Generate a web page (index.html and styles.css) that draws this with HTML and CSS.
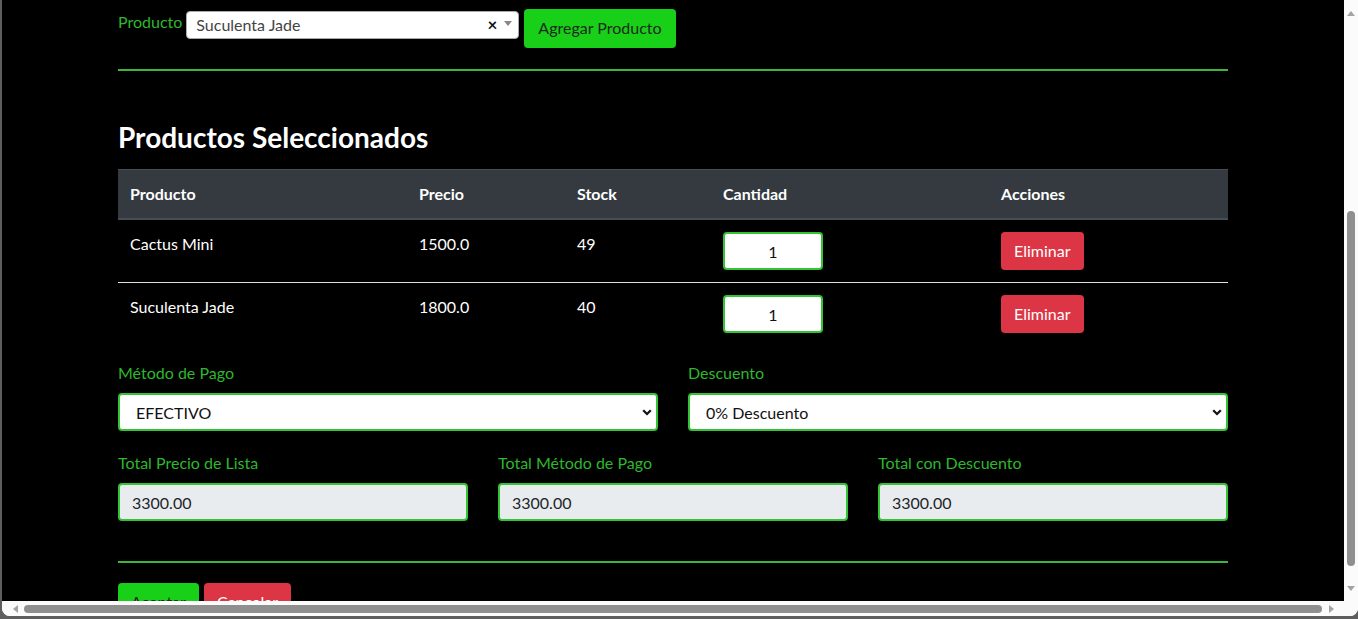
FILE: index.html
```html
<!DOCTYPE html>
<html lang="es">
<head>
<meta charset="utf-8">
<title>Nueva Venta</title>
<link rel="stylesheet" href="styles.css">
</head>
<body>
<div class="frame">
  <div class="view-row">
    <main class="viewport">
      <div class="container">
        <div class="add-row">
          <label class="lbl">Producto</label>
          <div class="s2">
            <span class="s2-text">Suculenta Jade</span>
            <span class="s2-clear">×</span>
            <svg class="s2-arrow" width="8" height="5" viewBox="0 0 8 5"><path d="M0 0H8L4 5Z" fill="#888"/></svg>
          </div>
          <button class="btn btn-green btn-add">Agregar Producto</button>
        </div>
        <hr class="sep sep-top">
        <h3 class="title">Productos Seleccionados</h3>
        <table class="tbl">
          <thead>
            <tr><th class="c1">Producto</th><th class="c2">Precio</th><th class="c3">Stock</th><th class="c4">Cantidad</th><th class="c5">Acciones</th></tr>
          </thead>
          <tbody>
            <tr><td>Cactus Mini</td><td>1500.0</td><td>49</td><td><input class="qty" type="text" value="1"></td><td><button class="btn btn-red">Eliminar</button></td></tr>
            <tr><td>Suculenta Jade</td><td>1800.0</td><td>40</td><td><input class="qty" type="text" value="1"></td><td><button class="btn btn-red">Eliminar</button></td></tr>
          </tbody>
        </table>
        <div class="grid2">
          <div class="field">
            <label class="flbl">Método de Pago</label>
            <div class="selwrap">
              <select class="fsel"><option>EFECTIVO</option></select>
              <svg class="chev" width="10" height="7" viewBox="0 0 10 7"><path d="M1.2 1.2L5 5L8.8 1.2" fill="none" stroke="#111" stroke-width="2.2"/></svg>
            </div>
          </div>
          <div class="field">
            <label class="flbl">Descuento</label>
            <div class="selwrap">
              <select class="fsel"><option>0% Descuento</option></select>
              <svg class="chev" width="10" height="7" viewBox="0 0 10 7"><path d="M1.2 1.2L5 5L8.8 1.2" fill="none" stroke="#111" stroke-width="2.2"/></svg>
            </div>
          </div>
        </div>
        <div class="grid3">
          <div class="field">
            <label class="flbl">Total Precio de Lista</label>
            <input class="ro" type="text" value="3300.00" readonly>
          </div>
          <div class="field">
            <label class="flbl">Total Método de Pago</label>
            <input class="ro" type="text" value="3300.00" readonly>
          </div>
          <div class="field">
            <label class="flbl">Total con Descuento</label>
            <input class="ro" type="text" value="3300.00" readonly>
          </div>
        </div>
        <hr class="sep sep-bottom">
        <div class="actions">
          <button class="btn btn-green">Aceptar</button>
          <button class="btn btn-red">Cancelar</button>
        </div>
      </div>
    </main>
    <div class="vscroll">
      <div class="arrow-box v-up"><svg width="8" height="5" viewBox="0 0 8 5"><path d="M0 5H8L4 0Z" fill="#a3a3a3"/></svg></div>
      <div class="v-gap"></div>
      <div class="v-thumb"></div>
      <div class="v-rest"></div>
      <div class="arrow-box v-down"><svg width="8" height="5" viewBox="0 0 8 5"><path d="M0 0H8L4 5Z" fill="#a3a3a3"/></svg></div>
    </div>
  </div>
  <div class="hscroll">
    <div class="arrow-box h-left"><svg width="5" height="8" viewBox="0 0 5 8"><path d="M5 0V8L0 4Z" fill="#a3a3a3"/></svg></div>
    <div class="h-track"><div class="h-thumb"></div></div>
    <div class="arrow-box h-right"><svg width="5" height="8" viewBox="0 0 5 8"><path d="M0 0V8L5 4Z" fill="#a3a3a3"/></svg></div>
    <div class="corner"></div>
  </div>
</div>
</body>
</html>
```
FILE: styles.css
```css
* { box-sizing: border-box; }
html, body {
  margin: 0;
  height: 619px;
  overflow: hidden;
  background: #5e5e5e;
}
body {
  font-family: Lato, "Liberation Sans", sans-serif;
  font-size: 16px;
  line-height: 24px;
  color: #fff;
}
.frame {
  margin-left: 2px;
  height: 616px;
  background: #fbfbfb;
  border-radius: 0 0 8px 8px;
  display: flex;
  flex-direction: column;
  overflow: hidden;
}
.view-row {
  height: 601px;
  display: flex;
}
.viewport {
  flex: 1;
  background: #000;
  overflow: hidden;
}
.container {
  width: 1110px;
  margin: 0 auto;
  padding-top: 9px;
}
.add-row {
  display: flex;
  align-items: flex-start;
}
.lbl {
  color: #2db82d;
  margin-top: 1px;
  line-height: 24px;
}
.s2 {
  margin-top: 2px;
  margin-left: 4px;
  width: 333px;
  height: 28px;
  background: #fff;
  border: 1px solid #aaa;
  border-radius: 4px;
  display: flex;
  align-items: center;
  padding: 0 6px 0 9px;
  color: #444;
}
.s2-text { flex: 1; }
.s2-clear {
  color: #111;
  font-weight: 700;
  font-size: 17px;
  margin-right: 7px;
  margin-top: -1px;
}
.s2-arrow { margin-top: -4px; }
.btn {
  font-family: inherit;
  font-size: 16px;
  line-height: 24px;
  border: 0;
  border-radius: 4px;
  padding: 7px 13px;
  cursor: pointer;
}
.btn-green {
  background: #18d018;
  color: #1b2a1b;
}
.btn-add {
  margin-left: 5px;
  padding: 7px 14px 8px;
}
.btn-red {
  background: #dc3545;
  color: #fff;
}
.sep {
  border: 0;
  height: 2px;
  background: #3bb53b;
  margin: 0;
}
.sep-top { margin-top: 21px; margin-bottom: 49px; }
.title {
  margin: 0 0 15px;
  font-size: 28px;
  line-height: 34px;
  font-weight: 700;
}
.tbl {
  width: 100%;
  border-collapse: collapse;
  margin-bottom: 16px;
}
.tbl th {
  background: #343a40;
  border-top: 1px solid #454d55;
  border-bottom: 2px solid #454d55;
  text-align: left;
  padding: 12px;
  font-weight: 700;
}
.tbl td {
  border-top: 1px solid #dee2e6;
  padding: 12px;
  vertical-align: top;
}
.c1 { width: 289px; }
.c2 { width: 158px; }
.c3 { width: 146px; }
.c4 { width: 278px; }
.c5 { width: 239px; }
.qty {
  display: block;
  width: 100px;
  height: 38px;
  border: 2px solid #33c433;
  border-radius: 4px;
  text-align: center;
  font-family: inherit;
  font-size: 16px;
  color: #111;
  background: #fff;
}
.tbl .btn-red { display: block; padding: 7px 13px; }
.grid2 {
  display: grid;
  grid-template-columns: 1fr 1fr;
  column-gap: 30px;
  margin-bottom: 20px;
}
.grid3 {
  display: grid;
  grid-template-columns: 1fr 1fr 1fr;
  column-gap: 30px;
}
.field { display: flex; flex-direction: column; }
.flbl {
  color: #2db82d;
  margin-bottom: 8px;
}
.selwrap { position: relative; }
.fsel {
  appearance: none;
  -webkit-appearance: none;
  width: 100%;
  height: 38px;
  border: 2px solid #33c433;
  border-radius: 4px;
  background: #fff;
  padding: 0 30px 0 16px;
  font-family: inherit;
  font-size: 16px;
  color: #111;
}
.chev {
  position: absolute;
  right: 6px;
  top: 16px;
}
.ro {
  width: 100%;
  height: 38px;
  border: 2px solid #33c433;
  border-radius: 4px;
  background: #e9ecef;
  padding: 0 12px;
  font-family: inherit;
  font-size: 16px;
  color: #212529;
}
.sep-bottom { margin-top: 40px; margin-bottom: 20px; }
.actions { display: flex; gap: 5px; }
.actions .btn { padding: 7px 13px; }
.actions .btn-green { color: #1b2a1b; }

/* scrollbars */
.vscroll {
  width: 14px;
  background: #fbfbfb;
  display: flex;
  flex-direction: column;
  align-items: center;
}
.arrow-box {
  display: flex;
  align-items: center;
  justify-content: center;
  flex-shrink: 0;
}
.v-up { height: 22px; width: 14px; padding-top: 4px; }
.v-gap { height: 189px; }
.v-thumb {
  width: 8px;
  height: 355px;
  background: #8f8f8f;
  border-radius: 4px;
}
.v-rest { flex: 1; }
.v-down { height: 22px; width: 14px; padding-bottom: 4px; }
.hscroll {
  height: 15px;
  display: flex;
  align-items: center;
  background: #fbfbfb;
}
.h-left { width: 22px; height: 15px; padding-left: 4px; }
.h-track { flex: 1; display: flex; align-items: center; }
.h-thumb {
  width: 100%;
  height: 8px;
  background: #8f8f8f;
  border-radius: 4px;
}
.h-right { width: 22px; height: 15px; padding-right: 4px; }
.corner { width: 14px; height: 15px; }
```
